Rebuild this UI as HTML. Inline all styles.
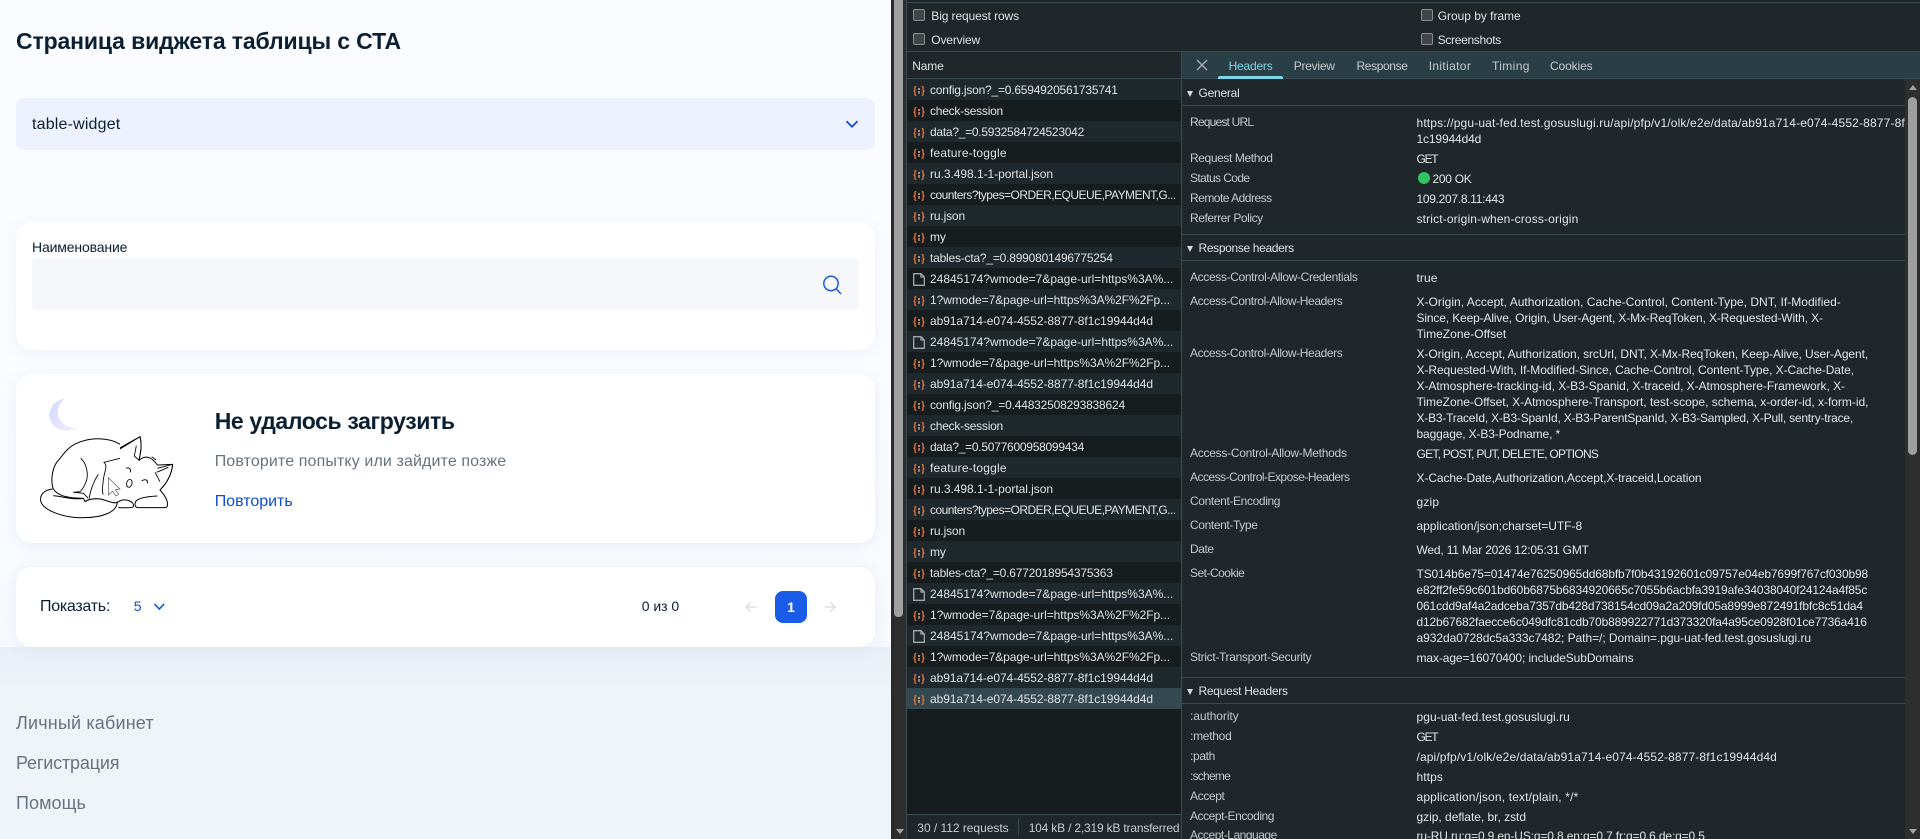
<!DOCTYPE html>
<html lang="ru"><head><meta charset="utf-8"><title>Страница виджета таблицы с СТА</title>
<style>
*{box-sizing:border-box}
html,body{margin:0;padding:0;width:1920px;height:839px;overflow:hidden;background:#fafcff;font-family:"Liberation Sans","Noto Sans CJK SC",sans-serif}
.a{position:absolute;white-space:nowrap}
.t{position:absolute;white-space:nowrap;line-height:16px;height:16px}
#main{position:absolute;left:0;top:0;width:891px;height:839px;background:linear-gradient(#fbfcff 0,#fafcff 350px,#f7f9fd 647px);overflow:hidden}
.card{position:absolute;left:16px;width:859px;background:#fff;border-radius:16px;box-shadow:0 2px 16px rgba(90,120,180,.09)}
#foot{position:absolute;left:0;top:647px;width:891px;height:192px;background:linear-gradient(#e9eff7 0,#eff4f9 50px)}
.fl{position:absolute;left:16px;font-size:18px;line-height:20px;color:#66727f;white-space:nowrap}
#dt{position:absolute;left:891px;top:0;width:1029px;height:839px;background:#1f272b;overflow:hidden;color:#dfe3e4;font-size:12px}
.row{position:absolute;left:16px;width:274px;height:21px;line-height:22px;white-space:nowrap;overflow:hidden;color:#dfe3e4;padding-left:23px}
.o{background:#1f292d}.e{background:#171c1f}.sel{background:#33484f}
.row svg{position:absolute;left:4px;top:4px}
.hl{position:absolute;left:291px;width:724px;height:1px;background:#3a4b52}
.k{position:absolute;left:299px;white-space:nowrap;line-height:16px;color:#c5cacb}
.v{position:absolute;left:525.5px;white-space:nowrap;line-height:16px;color:#e3e6e7}
.sh{position:absolute;left:307.500px;white-space:nowrap;line-height:16px;color:#dfe3e4}
.tri{position:absolute;left:296px;width:0;height:0;border-left:3.5px solid transparent;border-right:3.5px solid transparent;border-top:6px solid #d8dcdd}
.cb{position:absolute;width:12px;height:12px;border:1.5px solid #8a8f92;border-radius:2px;background:#434648}
.tb{position:absolute;top:58px;line-height:16px;color:#c6ccce;white-space:nowrap}
</style></head><body>
<div id="main">
<div id="foot"></div>
<div class="a" style="--w:385;left:16px;top:26px;font-size:23px;line-height:30px;font-weight:700;color:#0b1f33">Страница виджета таблицы с СТА</div>
<div class="a" style="left:16px;top:98px;width:859px;height:52px;background:#eef2fe;border-radius:8px"></div>
<div class="a" style="--w:88.400;left:32px;top:115px;font-size:16px;line-height:20px;color:#0b1f33">table-widget</div>
<svg class="a" style="left:845px;top:118px" width="14" height="12" viewBox="0 0 14 12"><path d="M1.500 3.200l5.500 5.500l5.500-5.500" fill="none" stroke="#0d4cd3" stroke-width="1.800"/></svg>

<div class="card" style="top:222px;height:128px"></div>
<div class="a" style="--w:95.300;left:32px;top:239px;font-size:14px;line-height:16px;color:#0b1f33">Наименование</div>
<div class="a" style="left:32px;top:258px;width:827px;height:52px;background:#f5f7fb;border-radius:4px"></div>
<svg class="a" style="left:820px;top:273px" width="24" height="24" viewBox="0 0 24 24"><circle cx="11" cy="10.500" r="7.200" fill="none" stroke="#1a5bd8" stroke-width="1.500"/><path d="M16.200 15.800L21 21" stroke="#1a5bd8" stroke-width="1.500" fill="none"/></svg>

<div class="card" style="top:374px;height:169px"></div>
<svg class="a" style="left:20px;top:385px" width="170" height="135" viewBox="0 0 510 405">
<defs><linearGradient id="m" x1="0" y1="0" x2="1" y2="1"><stop offset="0" stop-color="#d5d9fb"/><stop offset="1" stop-color="#f0efff"/></linearGradient></defs>
<path d="M135 41C100 45 86 75 88 95C92 125 125 152 178 127C150 135 118 115 114 88C112 68 120 52 135 41Z" fill="url(#m)"/>
<path d="M298 190L360 155C366 175 362 205 357 226C380 205 400 222 412 240L458 238C455 268 440 295 420 315C432 328 445 345 442 362C442 368 436 368 430 368L355 368C345 368 343 358 347 350C352 340 375 335 412 333" fill="#fff" stroke="#000" stroke-width="3" stroke-linejoin="round"/>
<path d="M300 178C270 158 215 155 170 175C140 188 130 210 110 232C95 255 92 290 100 312C115 335 150 340 190 340L195 350C205 342 225 340 240 342C260 345 280 358 292 352C315 336 345 350 340 365C335 370 310 368 295 368" fill="#fff" stroke="#000" stroke-width="3" stroke-linejoin="round"/>
<path d="M98 312C70 315 60 330 62 348C68 375 130 400 190 398C250 398 290 380 292 352C280 358 260 345 240 342C225 340 205 342 195 350L190 340C160 345 130 335 100 332" fill="#fff" stroke="#000" stroke-width="3" stroke-linejoin="round"/>
<path d="M300 192L360 155C366 175 362 205 357 226L343 213L349 182M300 220L252 232C265 245 252 260 250 285C248 305 245 320 250 328M182 220C200 235 205 265 200 285C195 300 190 310 180 320L160 322L190 325L205 340M235 268C220 290 210 320 208 340M412 250L458 238C455 268 440 295 420 315M410 262L445 247M405 262L420 290M395 215L408 225M318 250C328 245 335 255 330 262M365 288C375 280 385 285 382 295" fill="none" stroke="#000" stroke-width="2.600"/>
<ellipse cx="328" cy="295" rx="8" ry="12" transform="rotate(12 328 295)" fill="#fff" stroke="#000" stroke-width="2.600"/>
<path d="M265 278L265 330L278 318L288 333L296 328L286 314L300 312Z" fill="#fff" stroke="#555" stroke-width="2"/>
</svg>
<div class="a" style="--w:240;left:214.700px;top:406px;font-size:23px;line-height:30px;font-weight:700;color:#0b1f33">Не удалось загрузить</div>
<div class="a" style="--w:291.600;left:214.700px;top:452px;font-size:16px;line-height:20px;color:#66727f">Повторите попытку или зайдите позже</div>
<div class="a" style="--w:78;left:214.700px;top:492px;font-size:16px;line-height:20px;color:#0d4cd3">Повторить</div>

<div class="card" style="top:567px;height:80px"></div>
<div class="a" style="--w:70;left:40px;top:597px;font-size:16px;line-height:20px;color:#0b1f33">Показать:</div>
<div class="a" style="left:133.700px;top:596px;font-size:14px;line-height:20px;color:#0d4cd3">5</div>
<svg class="a" style="left:152px;top:601px" width="14" height="12" viewBox="0 0 14 12"><path d="M2.500 3l4.800 5l4.800-5" fill="none" stroke="#0d4cd3" stroke-width="1.600"/></svg>
<div class="a" style="--w:37.300;left:641.800px;top:596px;font-size:14px;line-height:20px;color:#0b1f33">0 из 0</div>
<svg class="a" style="left:744px;top:600px" width="14" height="14" viewBox="0 0 14 14"><path d="M12.500 7H2M6.500 2.500L2 7l4.500 4.500" fill="none" stroke="#dde0e8" stroke-width="1.600"/></svg>
<div class="a" style="left:775px;top:591px;width:32px;height:32px;border-radius:8px;background:#1a5be8;color:#fff;font-size:14px;font-weight:700;line-height:32px;text-align:center">1</div>
<svg class="a" style="left:823px;top:600px" width="14" height="14" viewBox="0 0 14 14"><path d="M1.500 7H12M7.500 2.500L12 7l-4.500 4.500" fill="none" stroke="#dde0e8" stroke-width="1.600"/></svg>

<div class="fl" style="--w:137.800;top:713px">Личный кабинет</div>
<div class="fl" style="--w:103.300;top:753px">Регистрация</div>
<div class="fl" style="--w:70;top:793px">Помощь</div>
</div>

<div id="dt">
<!-- page scrollbar -->
<div class="a" style="left:0;top:0;width:3px;height:839px;background:#2a2a2a"></div>
<div class="a" style="left:3px;top:0;width:12px;height:839px;background:#2e2e2e"></div>
<div class="a" style="left:3px;top:0;width:9px;height:617px;background:#9f9f9f;border-radius:0 0 4px 4px"></div>
<div class="a" style="left:5px;top:829px;width:0;height:0;border-left:4px solid transparent;border-right:4px solid transparent;border-top:5px solid #a5a5a5"></div>
<div class="a" style="left:15px;top:0;width:1px;height:839px;background:#3a4b52"></div>

<div class="a" style="left:16px;top:0;width:1013px;height:2px;background:#1c2326"></div>
<div class="a" style="left:16px;top:2px;width:1013px;height:1px;background:#3a4b52"></div>
<div class="cb" style="left:22px;top:9px"></div>
<div class="t" style="--w:87.700;left:40.300px;top:8px">Big request rows</div>
<div class="cb" style="left:22px;top:33px"></div>
<div class="t" style="--w:48.700;left:40.300px;top:32px">Overview</div>
<div class="cb" style="left:530px;top:9px"></div>
<div class="t" style="--w:83;left:546.700px;top:8px">Group by frame</div>
<div class="cb" style="left:530px;top:33px"></div>
<div class="t" style="--w:63.200;left:546.700px;top:32px">Screenshots</div>
<div class="a" style="left:16px;top:51px;width:1013px;height:1px;background:#3a4b52"></div>

<!-- list -->
<div class="a" style="left:16px;top:52px;width:274px;height:26px;background:#1f272b"></div>
<div class="t" style="--w:31.300;left:21.300px;top:58px">Name</div>
<div class="a" style="left:16px;top:78px;width:274px;height:1px;background:#3a4b52"></div>
<div class="a" style="left:16px;top:79px;width:274px;height:735px;background:#171c1f"></div>
<svg width="0" height="0" style="position:absolute"><defs>
<g id="j"><path d="M5.300 3.500C3.400 3.500 4 5 4 6.500C4 7.500 3.200 8 2.500 8C3.200 8 4 8.500 4 9.500C4 11 3.400 12.500 5.300 12.500M10.700 3.500C12.600 3.500 12 5 12 6.500C12 7.500 12.800 8 13.500 8C12.800 8 12 8.500 12 9.500C12 11 12.600 12.500 10.700 12.500" fill="none" stroke="#d5703f" stroke-width="1.400"/><circle cx="8" cy="6" r="1" fill="#efb08e"/><path d="M8 8v2.800" stroke="#efb08e" stroke-width="1.300"/></g>
<g id="d"><path d="M2.700 1.700H10L13.300 5V13.300H2.700Z M10 1.700V5H13.300" fill="none" stroke="#a5a9ab" stroke-width="1.300"/></g>
</defs></svg>
<div class="row o" style="--w:187.700;top:79px"><svg width="16" height="16"><use href="#j"/></svg>config.json?_=0.6594920561735741</div>
<div class="row e" style="--w:73;top:100px"><svg width="16" height="16"><use href="#j"/></svg>check-session</div>
<div class="row o" style="--w:154;top:121px"><svg width="16" height="16"><use href="#j"/></svg>data?_=0.5932584724523042</div>
<div class="row e" style="--w:76.700;top:142px"><svg width="16" height="16"><use href="#j"/></svg>feature-toggle</div>
<div class="row o" style="--w:123;top:163px"><svg width="16" height="16"><use href="#j"/></svg>ru.3.498.1-1-portal.json</div>
<div class="row e" style="--w:245.700;top:184px"><svg width="16" height="16"><use href="#j"/></svg>counters?types=ORDER,EQUEUE,PAYMENT,G...</div>
<div class="row o" style="--w:35;top:205px"><svg width="16" height="16"><use href="#j"/></svg>ru.json</div>
<div class="row e" style="--w:15.700;top:226px"><svg width="16" height="16"><use href="#j"/></svg>my</div>
<div class="row o" style="--w:182.700;top:247px"><svg width="16" height="16"><use href="#j"/></svg>tables-cta?_=0.8990801496775254</div>
<div class="row e" style="--w:243.300;top:268px"><svg width="16" height="16"><use href="#d"/></svg>24845174?wmode=7&amp;page-url=https%3A%...</div>
<div class="row o" style="--w:240;top:289px"><svg width="16" height="16"><use href="#j"/></svg>1?wmode=7&amp;page-url=https%3A%2F%2Fp...</div>
<div class="row e" style="--w:223;top:310px"><svg width="16" height="16"><use href="#j"/></svg>ab91a714-e074-4552-8877-8f1c19944d4d</div>
<div class="row o" style="--w:243.300;top:331px"><svg width="16" height="16"><use href="#d"/></svg>24845174?wmode=7&amp;page-url=https%3A%...</div>
<div class="row e" style="--w:240;top:352px"><svg width="16" height="16"><use href="#j"/></svg>1?wmode=7&amp;page-url=https%3A%2F%2Fp...</div>
<div class="row o" style="--w:223;top:373px"><svg width="16" height="16"><use href="#j"/></svg>ab91a714-e074-4552-8877-8f1c19944d4d</div>
<div class="row e" style="--w:195;top:394px"><svg width="16" height="16"><use href="#j"/></svg>config.json?_=0.44832508293838624</div>
<div class="row o" style="--w:73;top:415px"><svg width="16" height="16"><use href="#j"/></svg>check-session</div>
<div class="row e" style="--w:154;top:436px"><svg width="16" height="16"><use href="#j"/></svg>data?_=0.5077600958099434</div>
<div class="row o" style="--w:76.700;top:457px"><svg width="16" height="16"><use href="#j"/></svg>feature-toggle</div>
<div class="row e" style="--w:123;top:478px"><svg width="16" height="16"><use href="#j"/></svg>ru.3.498.1-1-portal.json</div>
<div class="row o" style="--w:245.700;top:499px"><svg width="16" height="16"><use href="#j"/></svg>counters?types=ORDER,EQUEUE,PAYMENT,G...</div>
<div class="row e" style="--w:35;top:520px"><svg width="16" height="16"><use href="#j"/></svg>ru.json</div>
<div class="row o" style="--w:15.700;top:541px"><svg width="16" height="16"><use href="#j"/></svg>my</div>
<div class="row e" style="--w:182.700;top:562px"><svg width="16" height="16"><use href="#j"/></svg>tables-cta?_=0.6772018954375363</div>
<div class="row o" style="--w:243.300;top:583px"><svg width="16" height="16"><use href="#d"/></svg>24845174?wmode=7&amp;page-url=https%3A%...</div>
<div class="row e" style="--w:240;top:604px"><svg width="16" height="16"><use href="#j"/></svg>1?wmode=7&amp;page-url=https%3A%2F%2Fp...</div>
<div class="row o" style="--w:243.300;top:625px"><svg width="16" height="16"><use href="#d"/></svg>24845174?wmode=7&amp;page-url=https%3A%...</div>
<div class="row e" style="--w:240;top:646px"><svg width="16" height="16"><use href="#j"/></svg>1?wmode=7&amp;page-url=https%3A%2F%2Fp...</div>
<div class="row o" style="--w:223;top:667px"><svg width="16" height="16"><use href="#j"/></svg>ab91a714-e074-4552-8877-8f1c19944d4d</div>
<div class="row sel" style="--w:223;top:688px"><svg width="16" height="16"><use href="#j"/></svg>ab91a714-e074-4552-8877-8f1c19944d4d</div>
<div class="a" style="left:16px;top:814px;width:274px;height:1px;background:#3a4b52"></div>
<div class="a" style="left:16px;top:815px;width:274px;height:24px;background:#1f272b"></div>
<div class="t" style="--w:91.300;left:26.300px;top:820px;color:#c8cdcf">30 / 112 requests</div>
<div class="a" style="left:127px;top:818px;width:1px;height:17px;background:#3a4b52"></div>
<div class="t" style="--w:150.700;left:137.700px;top:820px;color:#c8cdcf">104 kB / 2,319 kB transferred</div>
<div class="a" style="left:290px;top:52px;width:1px;height:787px;background:#3a4b52"></div>

<!-- tabs -->
<div class="a" style="left:291px;top:52px;width:738px;height:26px;background:#2a3e45"></div>
<div class="a" style="left:291px;top:78px;width:738px;height:1px;background:#3a4b52"></div>
<svg class="a" style="left:305px;top:59px" width="12" height="12" viewBox="0 0 12 12"><path d="M1 1l10 10M11 1L1 11" stroke="#a9b0b2" stroke-width="1.400"/></svg>
<div class="tb" style="--w:43.900;left:337.600px;color:#7fd6e6">Headers</div>
<div class="a" style="left:327px;top:76px;width:65px;height:3px;background:#7cd8e8;border-radius:2px 2px 0 0"></div>
<div class="tb" style="--w:41;left:402.700px">Preview</div>
<div class="tb" style="--w:51;left:465.500px">Response</div>
<div class="tb" style="--w:42.500;left:537.700px">Initiator</div>
<div class="tb" style="--w:37.800;left:601px">Timing</div>
<div class="tb" style="--w:42.500;left:659px">Cookies</div>

<!-- details -->
<div class="tri" style="top:91px"></div><div class="sh" style="--w:41;top:85px">General</div>
<div class="hl" style="top:105px"></div>
<div class="k" style="--w:63.200;top:114px">Request URL</div>
<div class="v" style="--w:488.400;top:115px">https://pgu-uat-fed.test.gosuslugi.ru/api/pfp/v1/olk/e2e/data/ab91a714-e074-4552-8877-8f</div>
<div class="v" style="--w:64.700;top:131px">1c19944d4d</div>
<div class="k" style="--w:82.600;top:150px">Request Method</div><div class="v" style="--w:20.800;top:151px">GET</div>
<div class="k" style="--w:59.500;top:170px">Status Code</div>
<div class="a" style="left:527px;top:172px;width:12px;height:12px;border-radius:50%;background:#2fc25f"></div>
<div class="v" style="--w:39;top:171px;left:541.500px">200 OK</div>
<div class="k" style="--w:81.600;top:190px">Remote Address</div><div class="v" style="--w:87.800;top:191px">109.207.8.11:443</div>
<div class="k" style="--w:72.700;top:210px">Referrer Policy</div><div class="v" style="--w:161.900;top:211px">strict-origin-when-cross-origin</div>
<div class="hl" style="top:234px"></div>
<div class="tri" style="top:246px"></div><div class="sh" style="--w:95.300;top:240px">Response headers</div>
<div class="hl" style="top:260px"></div>
<div class="k" style="--w:167.500;top:269px">Access-Control-Allow-Credentials</div><div class="v" style="--w:21;top:270px">true</div>
<div class="k" style="--w:152.400;top:293px">Access-Control-Allow-Headers</div>
<div class="v" style="--w:424.300;top:294px">X-Origin, Accept, Authorization, Cache-Control, Content-Type, DNT, If-Modified-</div>
<div class="v" style="--w:406.300;top:310px">Since, Keep-Alive, Origin, User-Agent, X-Mx-ReqToken, X-Requested-With, X-</div>
<div class="v" style="--w:89.700;top:326px">TimeZone-Offset</div>
<div class="k" style="--w:152.400;top:345px">Access-Control-Allow-Headers</div>
<div class="v" style="--w:451.600;top:346px">X-Origin, Accept, Authorization, srcUrl, DNT, X-Mx-ReqToken, Keep-Alive, User-Agent,</div>
<div class="v" style="--w:437.500;top:362px">X-Requested-With, If-Modified-Since, Cache-Control, Content-Type, X-Cache-Date,</div>
<div class="v" style="--w:428.500;top:378px">X-Atmosphere-tracking-id, X-B3-Spanid, X-traceid, X-Atmosphere-Framework, X-</div>
<div class="v" style="--w:452;top:394px">TimeZone-Offset, X-Atmosphere-Transport, test-scope, schema, x-order-id, x-form-id,</div>
<div class="v" style="--w:436.500;top:410px">X-B3-TraceId, X-B3-SpanId, X-B3-ParentSpanId, X-B3-Sampled, X-Pull, sentry-trace,</div>
<div class="v" style="--w:143.500;top:426px">baggage, X-B3-Podname, *</div>
<div class="k" style="--w:156.700;top:445px">Access-Control-Allow-Methods</div><div class="v" style="--w:181.700;top:446px">GET, POST, PUT, DELETE, OPTIONS</div>
<div class="k" style="--w:159.500;top:469px">Access-Control-Expose-Headers</div><div class="v" style="--w:285;top:470px">X-Cache-Date,Authorization,Accept,X-traceid,Location</div>
<div class="k" style="--w:90.100;top:493px">Content-Encoding</div><div class="v" style="--w:22.700;top:494px">gzip</div>
<div class="k" style="--w:67.500;top:517px">Content-Type</div><div class="v" style="--w:165.600;top:518px">application/json;charset=UTF-8</div>
<div class="k" style="--w:23.600;top:541px">Date</div><div class="v" style="--w:172.300;top:542px">Wed, 11 Mar 2026 12:05:31 GMT</div>
<div class="k" style="--w:54.300;top:565px">Set-Cookie</div>
<div class="v" style="--w:451.600;top:566px">TS014b6e75=01474e76250965dd68bfb7f0b43192601c09757e04eb7699f767cf030b98</div>
<div class="v" style="--w:450.700;top:582px">e82ff2fe59c601bd60b6875b6834920665c7055b6acbfa3919afe34038040f24124a4f85c</div>
<div class="v" style="--w:446.400;top:598px">061cdd9af4a2adceba7357db428d738154cd09a2a209fd05a8999e872491fbfc8c51da4</div>
<div class="v" style="--w:450.200;top:614px">d12b67682faecce6c049dfc81cdb70b889922771d373320fa4a95ce0928f01ce7736a416</div>
<div class="v" style="--w:394.500;top:630px">a932da0728dc5a333c7482; Path=/; Domain=.pgu-uat-fed.test.gosuslugi.ru</div>
<div class="k" style="--w:121.300;top:649px">Strict-Transport-Security</div><div class="v" style="--w:217;top:650px">max-age=16070400; includeSubDomains</div>
<div class="hl" style="top:677px"></div>
<div class="tri" style="top:689px"></div><div class="sh" style="--w:89.200;top:683px">Request Headers</div>
<div class="hl" style="top:703px"></div>
<div class="k" style="--w:48.600;top:708px">:authority</div><div class="v" style="--w:153.400;top:709px">pgu-uat-fed.test.gosuslugi.ru</div>
<div class="k" style="--w:41.500;top:728px">:method</div><div class="v" style="--w:20.800;top:729px">GET</div>
<div class="k" style="--w:25;top:748px">:path</div><div class="v" style="--w:360.500;top:749px">/api/pfp/v1/olk/e2e/data/ab91a714-e074-4552-8877-8f1c19944d4d</div>
<div class="k" style="--w:40;top:768px">:scheme</div><div class="v" style="--w:26.400;top:769px">https</div>
<div class="k" style="--w:34.500;top:788px">Accept</div><div class="v" style="--w:161.900;top:789px">application/json, text/plain, */*</div>
<div class="k" style="--w:84;top:808px">Accept-Encoding</div><div class="v" style="--w:109.500;top:809px">gzip, deflate, br, zstd</div>
<div class="k" style="--w:86.800;top:827px">Accept-Language</div><div class="v" style="--w:288.300;top:828px">ru-RU,ru;q=0.9,en-US;q=0.8,en;q=0.7,fr;q=0.6,de;q=0.5</div>

<!-- details scrollbar -->
<div class="a" style="left:1014px;top:79px;width:15px;height:760px;background:#2e2e2e"></div>
<div class="a" style="left:1018px;top:85px;width:0;height:0;border-left:4px solid transparent;border-right:4px solid transparent;border-bottom:5px solid #a5a5a5"></div>
<div class="a" style="left:1017px;top:97px;width:9px;height:358px;background:#9f9f9f;border-radius:5px"></div>
<div class="a" style="left:1018px;top:829px;width:0;height:0;border-left:4px solid transparent;border-right:4px solid transparent;border-top:5px solid #a5a5a5"></div>
</div>
<script>
document.querySelectorAll('[style*="--w"]').forEach(function(e){
  var w=parseFloat(e.style.getPropertyValue('--w'));
  var n=e.lastChild,s=n.textContent;
  var r=document.createRange();r.selectNodeContents(n);
  var c=r.getBoundingClientRect().width;
  e.style.letterSpacing=((w-c)/s.length).toFixed(3)+'px';
});
</script>
</body></html>
